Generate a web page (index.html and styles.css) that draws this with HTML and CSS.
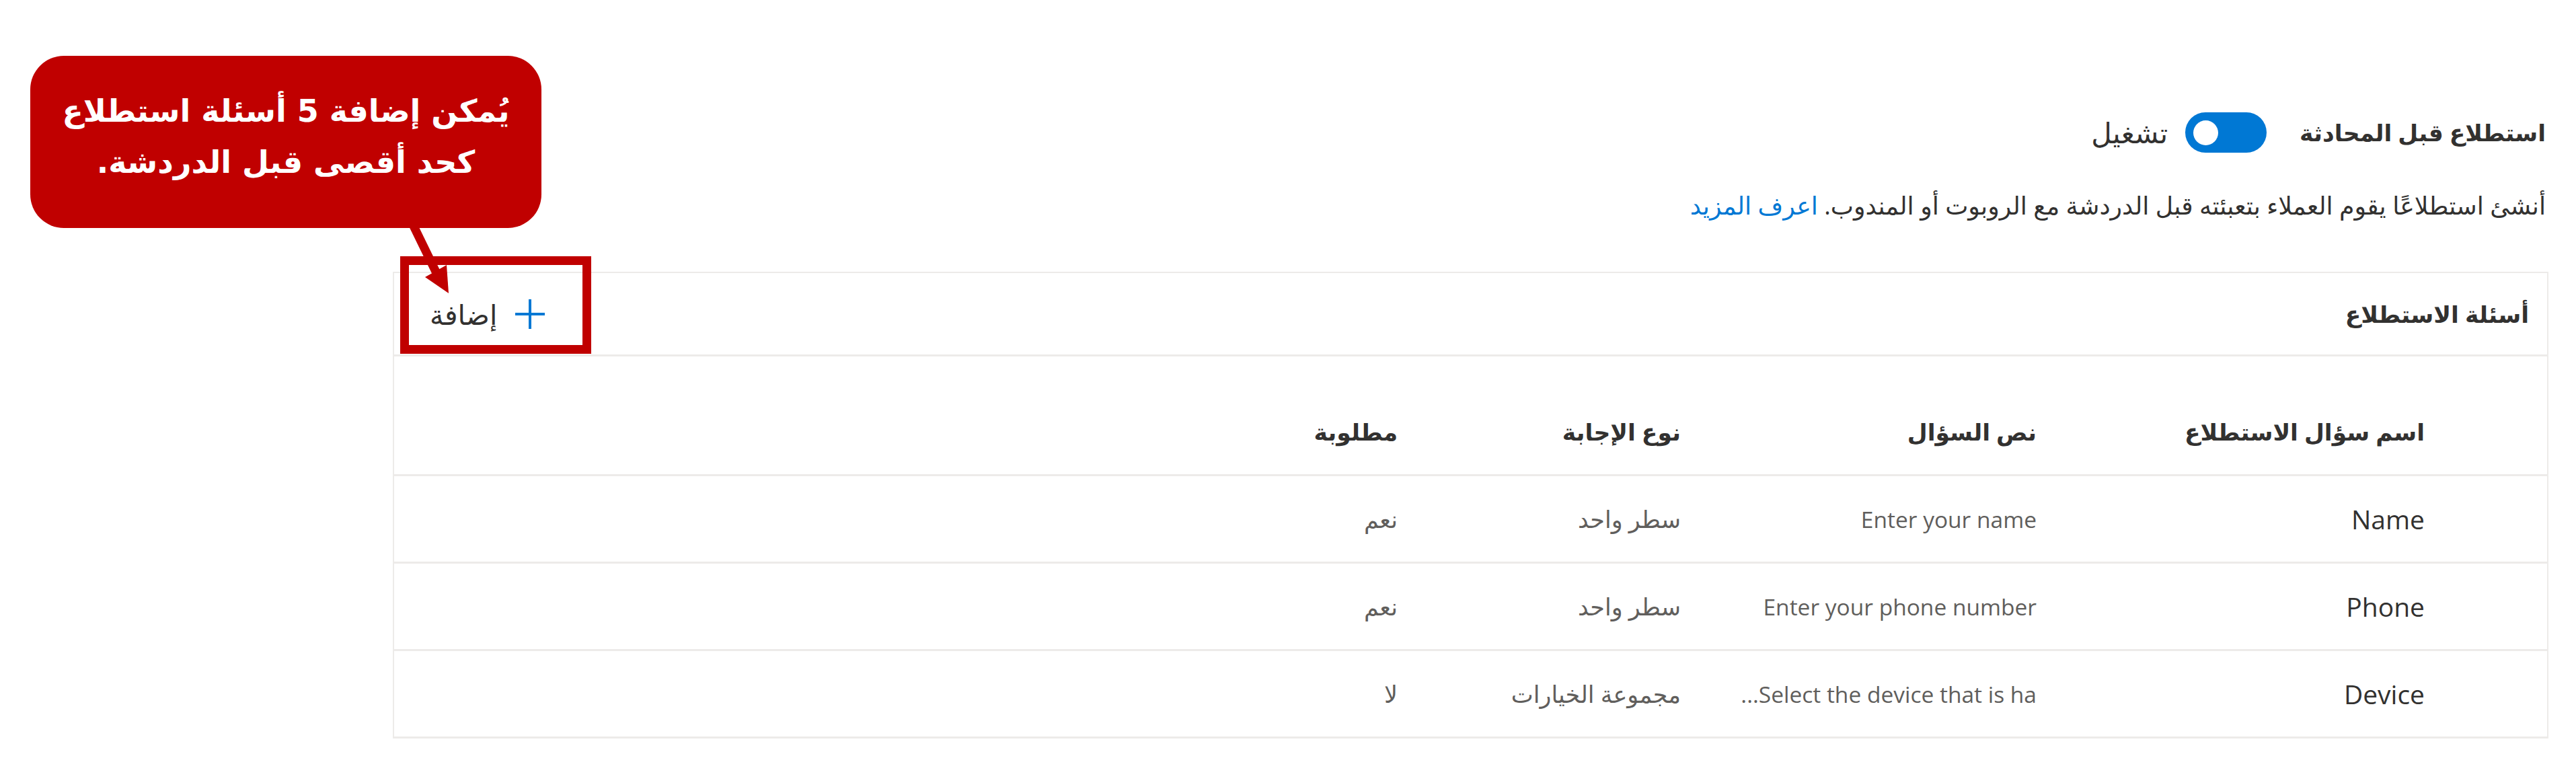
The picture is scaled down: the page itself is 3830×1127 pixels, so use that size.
FILE: index.html
```html
<!DOCTYPE html>
<html lang="ar" dir="rtl">
<head>
<meta charset="utf-8">
<title>استطلاع قبل المحادثة</title>
<link rel="stylesheet" href="styles.css">
</head>
<body>
<div class="page">
  <div class="setting-row">
    <h1 class="setting-title">استطلاع قبل المحادثة</h1>
    <span class="toggle" role="switch" aria-checked="true"><span class="knob"></span></span>
    <span class="toggle-label">تشغيل</span>
  </div>
  <p class="desc">أنشئ استطلاعًا يقوم العملاء بتعبئته قبل الدردشة مع الروبوت أو المندوب. <a class="link" href="#">اعرف المزيد</a></p>

  <section class="card">
    <div class="card-head">
      <h2 class="card-title">أسئلة الاستطلاع</h2>
      <button class="add-btn" type="button">
        <svg class="plus" viewBox="0 0 48 48" width="48" height="48"><path d="M24 2V46M2 24H46" stroke="#0078d4" stroke-width="4" fill="none"/></svg>
        <span>إضافة</span>
      </button>
    </div>
    <div class="table">
      <div class="row head">
        <div class="cell">اسم سؤال الاستطلاع</div>
        <div class="cell">نص السؤال</div>
        <div class="cell">نوع الإجابة</div>
        <div class="cell">مطلوبة</div>
      </div>
      <div class="row">
        <div class="cell name" dir="ltr">Name</div>
        <div class="cell sub latin" dir="ltr">Enter your name</div>
        <div class="cell sub">سطر واحد</div>
        <div class="cell sub">نعم</div>
      </div>
      <div class="row">
        <div class="cell name" dir="ltr">Phone</div>
        <div class="cell sub latin" dir="ltr">Enter your phone number</div>
        <div class="cell sub">سطر واحد</div>
        <div class="cell sub">نعم</div>
      </div>
      <div class="row">
        <div class="cell name" dir="ltr">Device</div>
        <div class="cell sub latin">Select the device that is ha...</div>
        <div class="cell sub">مجموعة الخيارات</div>
        <div class="cell sub">لا</div>
      </div>
    </div>
  </section>
</div>

<div class="callout">يُمكن إضافة 5 أسئلة استطلاع<br>كحد أقصى قبل الدردشة.</div>
<svg class="arrow" width="700" height="460" viewBox="0 0 700 460">
  <line x1="612" y1="330" x2="649" y2="406" stroke="#c00000" stroke-width="13"/>
  <polygon points="632,412 664,394 667,436" fill="#c00000"/>
</svg>
<div class="highlight"></div>
</body>
</html>
```

FILE: styles.css
```css
html, body {
  margin: 0;
  padding: 0;
  background: #ffffff;
}
body {
  font-family: "Open Sans", "DejaVu Sans", sans-serif;
  color: #323130;
  width: 3830px;
  height: 1127px;
  overflow: hidden;
  position: relative;
}
.page {
  padding: 167px 41px 0 584px;
}
.setting-row {
  display: flex;
  align-items: center;
  height: 60px;
  padding-right: 4px;
}
.setting-title {
  margin: 0 0 0 49px;
  font-size: 34.5px;
  font-weight: 600;
  line-height: 60px;
  color: #323130;
}
.toggle {
  width: 121px;
  height: 60px;
  border-radius: 30px;
  background: #0078d4;
  display: flex;
  align-items: center;
  justify-content: flex-end;
  padding-left: 12px;
  box-sizing: border-box;
}
.knob {
  width: 37px;
  height: 37px;
  border-radius: 50%;
  background: #ffffff;
}
.toggle-label {
  margin-right: 26px;
  font-size: 42px;
  line-height: 60px;
}
.desc {
  margin: 53px 4px 0 0;
  font-size: 36.3px;
  line-height: 50px;
  color: #323130;
}
.link {
  color: #0078d4;
  text-decoration: none;
}
.card {
  margin-top: 74px;
  border: 2px solid #edebe9;
  border-bottom-width: 3px;
}
.card-head {
  height: 121px;
  display: flex;
  align-items: center;
  justify-content: space-between;
  padding: 0 27px 0 53px;
  border-bottom: 3px solid #edebe9;
}
.card-title {
  margin: 0;
  font-size: 34.6px;
  font-weight: 600;
  color: #323130;
}
.add-btn {
  display: flex;
  align-items: center;
  gap: 25px;
  background: none;
  border: 0;
  padding: 0;
  font-family: inherit;
  font-size: 41px;
  color: #323130;
}
.plus {
  display: block;
}
.table {
  padding-top: 48px;
}
.row {
  display: grid;
  grid-template-columns: 577px 529px 421px 1fr;
  height: 127px;
  align-items: center;
  padding-right: 182px;
  border-bottom: 3px solid #edebe9;
}
.row:last-child {
  border-bottom: 0;
}
.row.head .cell {
  font-size: 34.5px;
  font-weight: 600;
  color: #323130;
}
.cell {
  text-align: right;
  white-space: nowrap;
}
.cell.name {
  font-size: 39px;
  color: #323130;
}
.cell.sub {
  font-size: 35px;
  color: #605e5c;
}
.cell.sub.latin {
  font-size: 33.5px;
}
.callout {
  position: absolute;
  left: 45px;
  top: 83px;
  width: 760px;
  height: 256px;
  padding-bottom: 16px;
  box-sizing: border-box;
  border-radius: 50px;
  background: #c00000;
  color: #ffffff;
  font-family: "DejaVu Sans", "Liberation Sans", sans-serif;
  font-weight: 700;
  font-size: 46px;
  line-height: 76px;
  display: flex;
  align-items: center;
  justify-content: center;
  text-align: center;
}
.arrow {
  position: absolute;
  left: 0;
  top: 0;
}
.highlight {
  position: absolute;
  left: 595px;
  top: 381px;
  width: 258px;
  height: 119px;
  border: 13px solid #c00000;
}
```
